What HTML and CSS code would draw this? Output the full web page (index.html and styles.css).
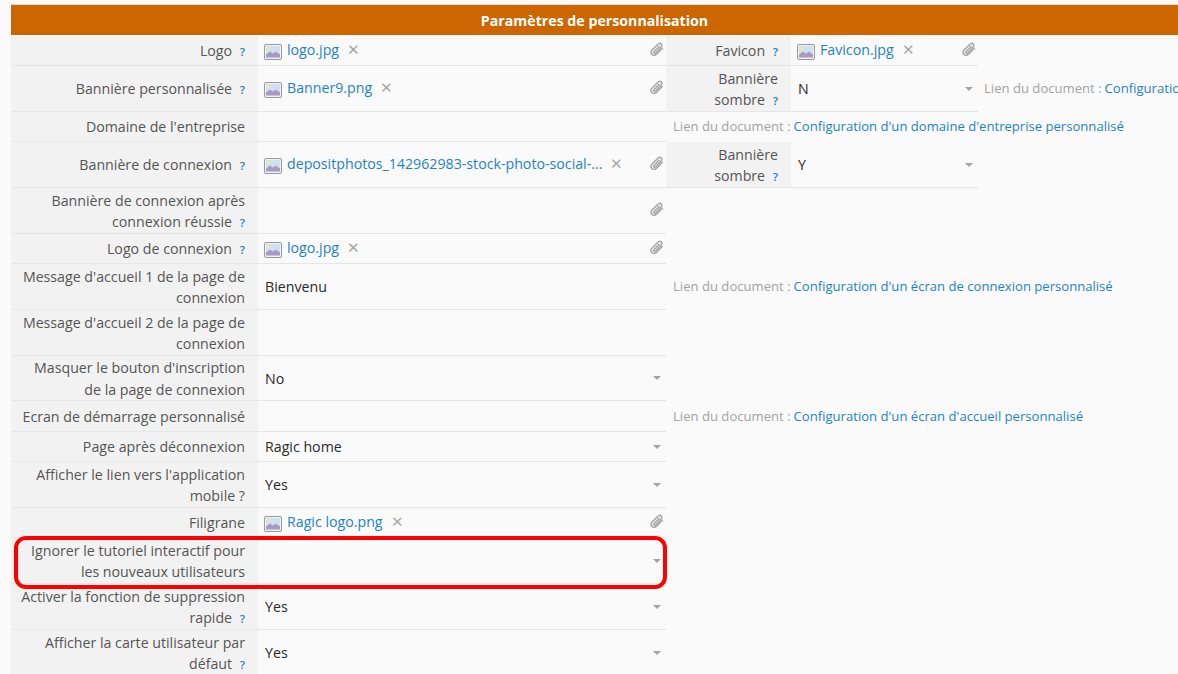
FILE: index.html
```html
<!DOCTYPE html>
<html lang="fr">
<head>
<meta charset="utf-8">
<title>Paramètres de personnalisation</title>
<link rel="stylesheet" href="styles.css">
</head>
<body>
<svg class="defs" width="0" height="0" aria-hidden="true">
  <symbol id="pic" viewBox="0 0 18 16">
    <rect x=".5" y=".5" width="17" height="15" rx="1.5" fill="#f1f1f1" stroke="#9a9a9a"/>
    <rect x="2" y="2" width="14" height="11.5" fill="#cfe0f2"/>
    <circle cx="4.5" cy="4.6" r="1.7" fill="#f4ec8a"/>
    <path d="M2 13.5V10.5L6 7.5L9 9.5L12 7.5L16 10.5V13.5Z" fill="#a79bc4"/>
  </symbol>
  <symbol id="clip" viewBox="0 0 14 15">
    <path d="M12.3 6.2L6.6 12.2C5.2 13.7 3.1 13.8 1.9 12.6C.7 11.4.9 9.5 2.2 8.1L7.9 2.2C8.9 1.2 10.3 1 11.2 1.9C12.1 2.8 11.9 4.1 11 5.1L5.5 10.9C5 11.4 4.3 11.5 3.9 11.1C3.5 10.7 3.6 10 4.1 9.5L9.2 4.2" fill="none" stroke="#a3a3a3" stroke-width="1.4" stroke-linecap="round"/>
  </symbol>
</svg>
<main class="form">
  <div class="title">Paramètres de personnalisation</div>

  <div class="label"><span>Logo <a class="help">?</a></span></div>
  <div class="value"><svg class="pic"><use href="#pic"/></svg><a class="file">logo.jpg</a><span class="del">✕</span><svg class="clip"><use href="#clip"/></svg></div>
  <div class="label"><span>Favicon <a class="help">?</a></span></div>
  <div class="value"><svg class="pic"><use href="#pic"/></svg><a class="file">Favicon.jpg</a><span class="del">✕</span><svg class="clip"><use href="#clip"/></svg></div>
  <div class="blank"></div>

  <div class="label"><span>Bannière personnalisée <a class="help">?</a></span></div>
  <div class="value"><svg class="pic"><use href="#pic"/></svg><a class="file">Banner9.png</a><span class="del">✕</span><svg class="clip"><use href="#clip"/></svg></div>
  <div class="label"><span>Bannière sombre <a class="help">?</a></span></div>
  <div class="value"><span class="text">N</span><i class="arrow"></i></div>
  <div class="doc doc-narrow"><span>Lien du document :</span> <a>Configuration d'un logo personnalisé</a></div>

  <div class="label"><span>Domaine de l'entreprise</span></div>
  <div class="value"></div>
  <div class="doc doc-wide"><span>Lien du document :</span> <a>Configuration d'un domaine d'entreprise personnalisé</a></div>

  <div class="label"><span>Bannière de connexion <a class="help">?</a></span></div>
  <div class="value"><svg class="pic"><use href="#pic"/></svg><a class="file">depositphotos_142962983-stock-photo-social-...</a><span class="del">✕</span><svg class="clip"><use href="#clip"/></svg></div>
  <div class="label"><span>Bannière sombre <a class="help">?</a></span></div>
  <div class="value"><span class="text">Y</span><i class="arrow"></i></div>
  <div class="blank"></div>

  <div class="label"><span>Bannière de connexion après connexion réussie <a class="help">?</a></span></div>
  <div class="value"><svg class="clip"><use href="#clip"/></svg></div>
  <div class="doc doc-wide"></div>

  <div class="label"><span>Logo de connexion <a class="help">?</a></span></div>
  <div class="value"><svg class="pic"><use href="#pic"/></svg><a class="file">logo.jpg</a><span class="del">✕</span><svg class="clip"><use href="#clip"/></svg></div>
  <div class="doc doc-wide"></div>

  <div class="label"><span>Message d'accueil 1 de la page de connexion</span></div>
  <div class="value"><span class="text">Bienvenu</span></div>
  <div class="doc doc-wide"><span>Lien du document :</span> <a>Configuration d'un écran de connexion personnalisé</a></div>

  <div class="label"><span>Message d'accueil 2 de la page de connexion</span></div>
  <div class="value"></div>
  <div class="doc doc-wide"></div>

  <div class="label"><span>Masquer le bouton d'inscription de la page de connexion</span></div>
  <div class="value"><span class="text">No</span><i class="arrow"></i></div>
  <div class="doc doc-wide"></div>

  <div class="label"><span>Ecran de démarrage personnalisé</span></div>
  <div class="value"></div>
  <div class="doc doc-wide"><span>Lien du document :</span> <a>Configuration d'un écran d'accueil personnalisé</a></div>

  <div class="label"><span>Page après déconnexion</span></div>
  <div class="value"><span class="text">Ragic home</span><i class="arrow"></i></div>
  <div class="doc doc-wide"></div>

  <div class="label"><span>Afficher le lien vers l'application mobile ?</span></div>
  <div class="value"><span class="text">Yes</span><i class="arrow"></i></div>
  <div class="doc doc-wide"></div>

  <div class="label"><span>Filigrane</span></div>
  <div class="value"><svg class="pic"><use href="#pic"/></svg><a class="file">Ragic logo.png</a><span class="del">✕</span><svg class="clip"><use href="#clip"/></svg></div>
  <div class="doc doc-wide"></div>

  <div class="label"><span>Ignorer le tutoriel interactif pour les nouveaux utilisateurs</span></div>
  <div class="value"><i class="arrow"></i></div>
  <div class="doc doc-wide"></div>

  <div class="label"><span>Activer la fonction de suppression rapide <a class="help">?</a></span></div>
  <div class="value"><span class="text">Yes</span><i class="arrow"></i></div>
  <div class="doc doc-wide"></div>

  <div class="label"><span>Afficher la carte utilisateur par défaut <a class="help">?</a></span></div>
  <div class="value"><span class="text">Yes</span><i class="arrow"></i></div>
  <div class="doc doc-wide"></div>

  <div class="highlight"></div>
</main>
</body>
</html>
```
FILE: styles.css
```css
* { box-sizing: border-box; }
html, body { height: 100%; }
body {
  margin: 0;
  padding: 4px 0 0 11px;
  background: #fafafa;
  overflow: hidden;
  font-family: "Open Sans", "Noto Sans", sans-serif;
  font-size: 14.2px;
  color: #555;
}
.defs { position: absolute; }
.form {
  position: relative;
  display: grid;
  grid-template-columns: 247px 408px 125px 187px 1fr;
  grid-template-rows: 32px 30px 46px 30px 46px 46px 30px 46px 46px 45px 31px 30px 46px 30px 46px 46px 46px;
}
.title {
  grid-column: 1 / -1;
  background: #cc6600;
  border-top: 1px solid #ecdccb;
  color: #fff;
  font-weight: 700;
  font-size: 14.2px;
  text-align: center;
  line-height: 31px;
  margin-bottom: 1px;
}
.label {
  display: flex;
  align-items: center;
  justify-content: flex-end;
  text-align: right;
  background: #f2f2f2;
  border-bottom: 1px solid #e6e6e6;
  padding: 1px 13px 0 8px;
  line-height: 21.5px;
}
.help {
  display: inline-block;
  color: #1b7fcc;
  font-size: 11.5px;
  font-weight: 600;
  line-height: 12px;
  margin-left: 4px;
}
.value {
  display: flex;
  align-items: center;
  border-bottom: 1px solid #e6e6e6;
  padding: 0 2px 0 6px;
  min-width: 0;
  white-space: nowrap;
}
.text { color: #2b2b2b; margin-left: 1px; }
.pic { width: 18px; height: 16px; flex: none; margin-top: 2px; }
.file { color: #1d82cf; margin: -3px 0 0 5px; }
.del { color: #a8a8a8; font-size: 15px; line-height: 1; margin: -3px 0 0 8px; }
.clip { width: 14px; height: 15px; flex: none; margin: -2px 0 0 auto; }
.arrow {
  margin-left: auto;
  margin-right: 3px;
  width: 0;
  height: 0;
  border-style: solid;
  border-width: 4px 4.5px 0;
  border-color: #a3a3a3 transparent transparent;
}
.doc {
  display: flex;
  align-items: center;
  gap: 3px;
  white-space: nowrap;
  color: #a3a3a3;
  font-size: 13.1px;
  overflow: hidden;
  margin-top: -2px;
}
.doc a { color: #1d82cf; }
.doc-wide { grid-column: 3 / -1; padding-left: 7px; }
.doc-narrow { padding-left: 6px; }
.highlight {
  position: absolute;
  left: 3px;
  top: 532px;
  width: 653px;
  height: 53px;
  border: 4px solid #ff0000;
  border-radius: 12px;
}
```
